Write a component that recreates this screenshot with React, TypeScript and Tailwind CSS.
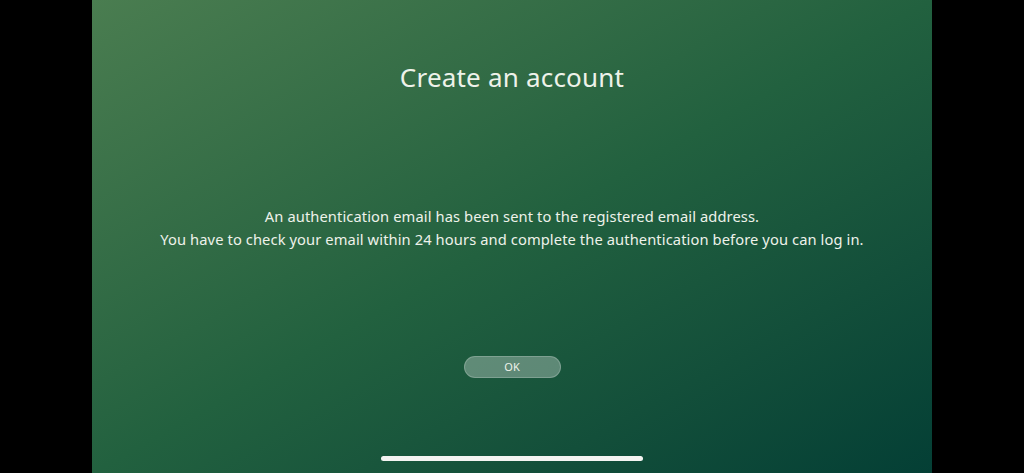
export default function App() {
  return (
    <div className="flex h-[473px] w-[1024px] bg-black">
      <div className="w-[92px] shrink-0" />
      {/* Main panel */}
      <div className="flex w-[840px] shrink-0 flex-col items-center bg-gradient-to-br from-[#4a7d50] via-[#22613f] to-[#043f35] font-['Noto_Sans',sans-serif] text-[#eef2ea]">
        <h1 className="mt-[59px] text-[26px] leading-[36px] tracking-[0.2px]">Create an account</h1>
        <div className="mt-[110px] text-center text-[14.7px] leading-[23px] tracking-[0.1px]">
          <p>An authentication email has been sent to the registered email address.</p>
          <p>You have to check your email within 24 hours and complete the authentication before you can log in.</p>
        </div>
        <button className="mt-[105px] flex h-[22px] w-[97px] items-center justify-center rounded-full border border-white/20 bg-white/30 text-[11px] text-[#eef2ea]">
          OK
        </button>
        <div className="mt-[78px] h-[5px] w-[262px] rounded-full bg-[#f4f4f2]" />
      </div>
      <div className="w-[92px] shrink-0" />
    </div>
  );
}
